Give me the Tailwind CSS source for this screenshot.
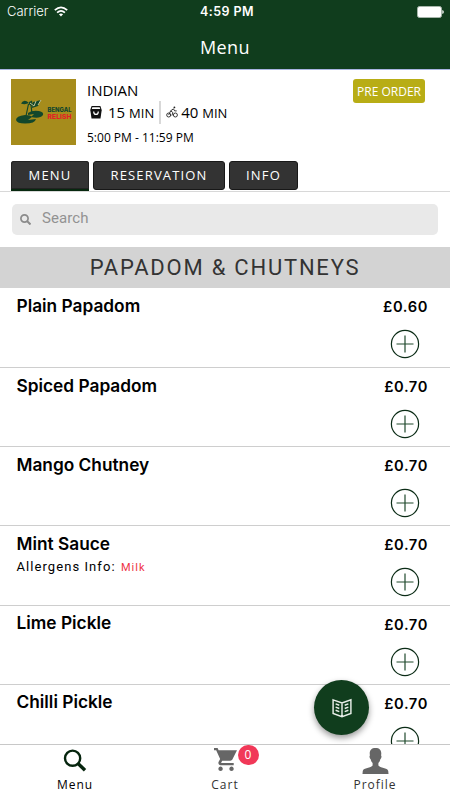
<!DOCTYPE html>
<html lang="en">
<head>
<meta charset="utf-8">
<meta name="viewport" content="width=device-width, initial-scale=1">
<title>Menu</title>
<script src="https://cdn.jsdelivr.net/npm/@tailwindcss/browser@4"></script>
</head>
<body class="bg-white">
<svg class="hidden">
  <symbol id="plus" viewBox="0 0 30 30"><circle cx="15" cy="15" r="13.6" fill="none" stroke="#0b2c16" stroke-width="1.2"/><path d="M15 6.500v17M6.500 15h17" stroke="#214a2d" stroke-width="1.200"/></symbol>
</svg>
<div class="relative flex h-[800px] w-[450px] flex-col overflow-hidden whitespace-nowrap bg-white font-['Open_Sans',sans-serif] text-black">
  <header class="h-[70px] shrink-0 border-b border-[#a9b4e0] bg-[#103d1d] text-white">
    <div class="grid h-[23px] grid-cols-3 items-center pl-[7px] pr-[6px] font-['Inter',sans-serif]">
      <div class="flex items-center gap-[6px]">
        <span class="text-[13px] font-light leading-[23px]">Carrier</span>
        <svg class="-mt-px h-[11px] w-[14px]" viewBox="0 0 14 11" fill="none" stroke="white" stroke-width="1.7"><path d="M.8 4.2Q7-1.6 13.2 4.2M3.1 6.6Q7 3 10.9 6.6"/><path d="M7 10.5L4.9 8.3Q7 6.5 9.1 8.3Z" fill="white" stroke="none"/></svg>
      </div>
      <span class="pl-[3px] pt-[2px] text-center text-[12.5px] font-semibold tracking-[.45px]">4:59 PM</span>
      <svg class="h-[12px] w-[27px] justify-self-end" viewBox="0 0 27 12"><rect x=".5" y=".5" width="24" height="11" rx="2" fill="white" stroke="#a7b6ab"/><path d="M25.3 4v4q1.5-.5 1.5-2T25.3 4" fill="white"/></svg>
    </div>
    <h1 class="pt-[12px] text-center text-[18px] font-normal leading-[24px] tracking-[.4px]">Menu</h1>
  </header>

  <section class="flex h-[91px] shrink-0 px-[11px] pt-[9px]">
    <svg class="h-[66px] w-[65px] shrink-0" viewBox="0 0 65 66">
      <rect width="65" height="66" fill="#a68c1c"/>
      <g fill="#12472b"><path d="M5 41q0-4 9-5 6 0 7 2l-4 3 8-1q-1 4.500-11 4.500-8 0-9-3.500zM17 34q4-3 11-2 5 1 4 4-3 4-12 2l3-3-6 1z"/><path d="M10 24.500q3-5 8-.5-4 2-8 .5zM18 23l3-1.500 1 6-4-2zM22 23l8-2-3 6-6 2z"/></g>
      <path d="M15 37l2.500-12M21 35l-1-9 5-2" fill="none" stroke="#12472b" stroke-width="1.2"/>
      <path d="M19 24l4 3M23 27l2-5M27 26l3-5" stroke="#d5d0a0" stroke-width=".9"/>
      <text x="36.500" y="32.500" font-family="Inter, sans-serif" font-weight="800" font-size="6" textLength="24" lengthAdjust="spacingAndGlyphs" fill="#12472b">BENGAL</text>
      <text x="36.500" y="39.500" font-family="Inter, sans-serif" font-weight="800" font-size="6.500" textLength="24" lengthAdjust="spacingAndGlyphs" fill="#e31f25">RELISH</text>
    </svg>
    <div class="pl-[11px]">
      <p class="pt-[2px] text-[15px] leading-[18px]">INDIAN</p>
      <div class="mt-px flex h-[24px] items-center">
        <svg class="ml-[3px] mr-[6px] h-[13px] w-[12px]" viewBox="0 0 12 12" preserveAspectRatio="none"><path d="M1 3.300L2 .6h8l1 2.700z" fill="none" stroke="#111" stroke-width="1.100"/><path d="M.3 3.600h11.400l-1.200 8H1.500z" fill="#111"/><path d="M3.700 5q0 2.800 2.300 2.800T8.300 5" fill="none" stroke="white" stroke-width="1.200"/></svg>
        <span class="text-[15px]">15 <span class="text-[13px]">MIN</span></span>
        <span class="ml-[5px] h-[23px] w-[2px] bg-[#d8d8d8]"></span>
        <svg class="ml-[5px] mr-[3px] h-[12px] w-[12px]" viewBox="0 0 12 12" fill="none" stroke="#222" stroke-width=".9"><circle cx="2.700" cy="9" r="2"/><circle cx="9.400" cy="9" r="2"/><path d="M2.700 9l2-4.200 2.700-1.900 1.300 2h2M4.700 4.800l2.200 1.800-1 3"/><circle cx="8.400" cy="1.400" r=".9" fill="#222" stroke="none"/></svg>
        <span class="text-[15px]">40 <span class="text-[13px]">MIN</span></span>
      </div>
      <p class="mt-[5px] text-[12px] leading-[18px]">5:00 PM - 11:59 PM</p>
    </div>
    <div class="ml-auto mr-[14px] flex h-[24px] w-[72px] items-center justify-center rounded-[3px] bg-[#b8ad15] pt-px text-[12px] text-white">PRE ORDER</div>
  </section>

  <nav class="flex h-[31px] shrink-0 gap-[4px] border-b border-[#d8d8d8] pl-[11px] text-[13px] font-medium tracking-[1.15px] text-white">
    <div class="flex h-[30px] w-[78px] items-center justify-center rounded-t-[3px] border-b-[2px] border-[#07280f] bg-[#333] pt-[2px] shadow-[inset_0_0_0_1px_#222]">MENU</div>
    <div class="flex h-[29px] w-[132px] items-center justify-center rounded-[3px] border border-[#181818] bg-[#333] pt-px">RESERVATION</div>
    <div class="flex h-[29px] w-[69px] items-center justify-center rounded-[3px] border border-[#181818] bg-[#333] pt-px">INFO</div>
  </nav>

  <section class="h-[55px] shrink-0 px-[12px] pt-[12px]">
    <div class="flex h-[31px] items-center rounded-[5px] bg-[#e9e9e9] pl-[8px] font-['Roboto',sans-serif] text-[15px] text-[#929292]">
      <svg class="-mt-px h-[11px] w-[11px]" viewBox="0 0 11 11" fill="none" stroke="#8b8b8b" stroke-width="1.700"><circle cx="4.500" cy="4.500" r="3.600"/><path d="M7 7l3.500 3.500" stroke-width="2"/></svg>
      <span class="-mt-[3px] ml-[11px] tracking-[.1px]">Search</span>
    </div>
  </section>

  <h2 class="h-[41px] shrink-0 bg-[#d3d3d3] text-center font-['Roboto',sans-serif] text-[22px] font-normal leading-[42px] tracking-[1.780px] text-[#333]">PAPADOM &amp; CHUTNEYS</h2>

  <main class="flex h-[456px] shrink-0 flex-col overflow-hidden pt-[.4px]">
    <article class="flex h-[79.3px] shrink-0 justify-between border-b border-[#cecece] pl-[16.5px] pr-[22px]">
      <h3 class="pt-[5px] font-['Inter',sans-serif] text-[17.3px] font-semibold leading-[25px]">Plain Papadom</h3>
      <div class="flex flex-col items-end"><span class="pt-[9px] font-['Inter',sans-serif] text-[14.7px] font-semibold leading-[20px] tracking-[.6px]">£0.60</span><svg class="mr-[8px] mt-[12px] size-[30px]"><use href="#plus"/></svg></div>
    </article>
    <article class="flex h-[79.3px] shrink-0 justify-between border-b border-[#cecece] pl-[16.5px] pr-[22px]">
      <h3 class="pt-[5px] font-['Inter',sans-serif] text-[17.3px] font-semibold leading-[25px]">Spiced Papadom</h3>
      <div class="flex flex-col items-end"><span class="pt-[9px] font-['Inter',sans-serif] text-[14.7px] font-semibold leading-[20px] tracking-[.6px]">£0.70</span><svg class="mr-[8px] mt-[12px] size-[30px]"><use href="#plus"/></svg></div>
    </article>
    <article class="flex h-[79.3px] shrink-0 justify-between border-b border-[#cecece] pl-[16.5px] pr-[22px]">
      <h3 class="pt-[5px] font-['Inter',sans-serif] text-[17.3px] font-semibold leading-[25px]">Mango Chutney</h3>
      <div class="flex flex-col items-end"><span class="pt-[9px] font-['Inter',sans-serif] text-[14.7px] font-semibold leading-[20px] tracking-[.6px]">£0.70</span><svg class="mr-[8px] mt-[12px] size-[30px]"><use href="#plus"/></svg></div>
    </article>
    <article class="flex h-[79.3px] shrink-0 justify-between border-b border-[#cecece] pl-[16.5px] pr-[22px]">
      <div>
        <h3 class="pt-[5px] font-['Inter',sans-serif] text-[17.3px] font-semibold leading-[25px]">Mint Sauce</h3>
        <p class="font-['Roboto',sans-serif] text-[13px] leading-[21px] tracking-[1.070px]">Allergens Info: <span class="ml-px text-[11px] text-[#ee3344]">Milk</span></p>
      </div>
      <div class="flex flex-col items-end"><span class="pt-[9px] font-['Inter',sans-serif] text-[14.7px] font-semibold leading-[20px] tracking-[.6px]">£0.70</span><svg class="mr-[8px] mt-[12px] size-[30px]"><use href="#plus"/></svg></div>
    </article>
    <article class="flex h-[79.3px] shrink-0 justify-between border-b border-[#cecece] pl-[16.5px] pr-[22px]">
      <h3 class="pt-[5px] font-['Inter',sans-serif] text-[17.3px] font-semibold leading-[24px]">Lime Pickle</h3>
      <div class="flex flex-col items-end"><span class="pt-[9px] font-['Inter',sans-serif] text-[14.7px] font-semibold leading-[20px] tracking-[.6px]">£0.70</span><svg class="mr-[8px] mt-[12px] size-[30px]"><use href="#plus"/></svg></div>
    </article>
    <article class="flex h-[79.3px] shrink-0 justify-between pl-[16.5px] pr-[22px]">
      <h3 class="pt-[5px] font-['Inter',sans-serif] text-[17.3px] font-semibold leading-[24px]">Chilli Pickle</h3>
      <div class="flex flex-col items-end"><span class="pt-[9px] font-['Inter',sans-serif] text-[14.7px] font-semibold leading-[20px] tracking-[.6px]">£0.70</span><svg class="mr-[8px] mt-[12px] size-[30px]"><use href="#plus"/></svg></div>
    </article>
  </main>

  <footer class="grid h-[56px] shrink-0 grid-cols-3 border-t border-[#c8c8c8] bg-white text-[12px] tracking-[1px]">
    <div class="flex flex-col items-center pt-[4px]">
      <svg class="h-[23px] w-[24px]" viewBox="0 0 24 23" fill="none" stroke="#06250e"><circle cx="9.600" cy="9.200" r="7.600" stroke-width="2.400"/><path d="M15 14.500l7 6.800" stroke-width="3.400"/></svg>
      <span class="mt-[4px] leading-[18px]">Menu</span>
    </div>
    <div class="flex flex-col items-center pt-[3px]">
      <div class="relative">
        <svg class="h-[23px] w-[23px]" viewBox="1 2 21 20" preserveAspectRatio="none" fill="#666"><path d="M7 18c-1.100 0-2 .9-2 2s.9 2 2 2 2-.9 2-2-.9-2-2-2zM1 2v2h2l3.600 7.600-1.350 2.450C4.500 15.400 5.500 17 7 17h12v-2H7.400l1.100-2h7.500c.75 0 1.400-.4 1.750-1L22 4H5.200l-.9-2zm16 16c-1.100 0-2 .9-2 2s.9 2 2 2 2-.9 2-2-.9-2-2-2z"/></svg>
        <span class="absolute -top-[3px] left-[24px] flex h-[20px] w-[21px] items-center justify-center rounded-full bg-[#f13858] text-[12px] tracking-normal text-white">0</span>
      </div>
      <span class="mt-[5px] leading-[18px] text-[#333]">Cart</span>
    </div>
    <div class="flex flex-col items-center pt-[3px]">
      <svg class="h-[26px] w-[27px]" viewBox="0 0 28 26" preserveAspectRatio="none" fill="#666"><path d="M14 0c-4 0-6 2-6 5.500l.2 2c-.9.5-.2 3.200.7 3.500.4 2 1.200 3.100 2.100 4v2.500C9.500 20 1.500 19.500.8 23L.5 26h27l-.3-3c-.7-3.500-8.700-3-10.200-5.500V15c.9-.9 1.700-2 2.100-4 .9-.3 1.600-3 .7-3.500l.2-2C20 2 18 0 14 0z"/></svg>
      <span class="mt-[2px] leading-[18px] text-[#333]">Profile</span>
    </div>
  </footer>

  <div class="absolute left-[314px] top-[680px] flex size-[55px] items-center justify-center rounded-full bg-[#103d1d] shadow-[0_3px_6px_rgba(0,0,0,.4)]">
    <svg class="h-[20px] w-[20px]" viewBox="0 0 22 21" fill="none" stroke="#e8eee8" stroke-width="1.600"><path d="M1.200 1.500L11 5l9.800-3.500v15L11 20l-9.800-3.500zM11 5v15M4 6l4 1.500M4 9.500L8 11M4 13l4 1.500M18 6l-4 1.500M18 9.500L14 11M18 13l-4 1.500"/></svg>
  </div>
</div>
</body>
</html>
